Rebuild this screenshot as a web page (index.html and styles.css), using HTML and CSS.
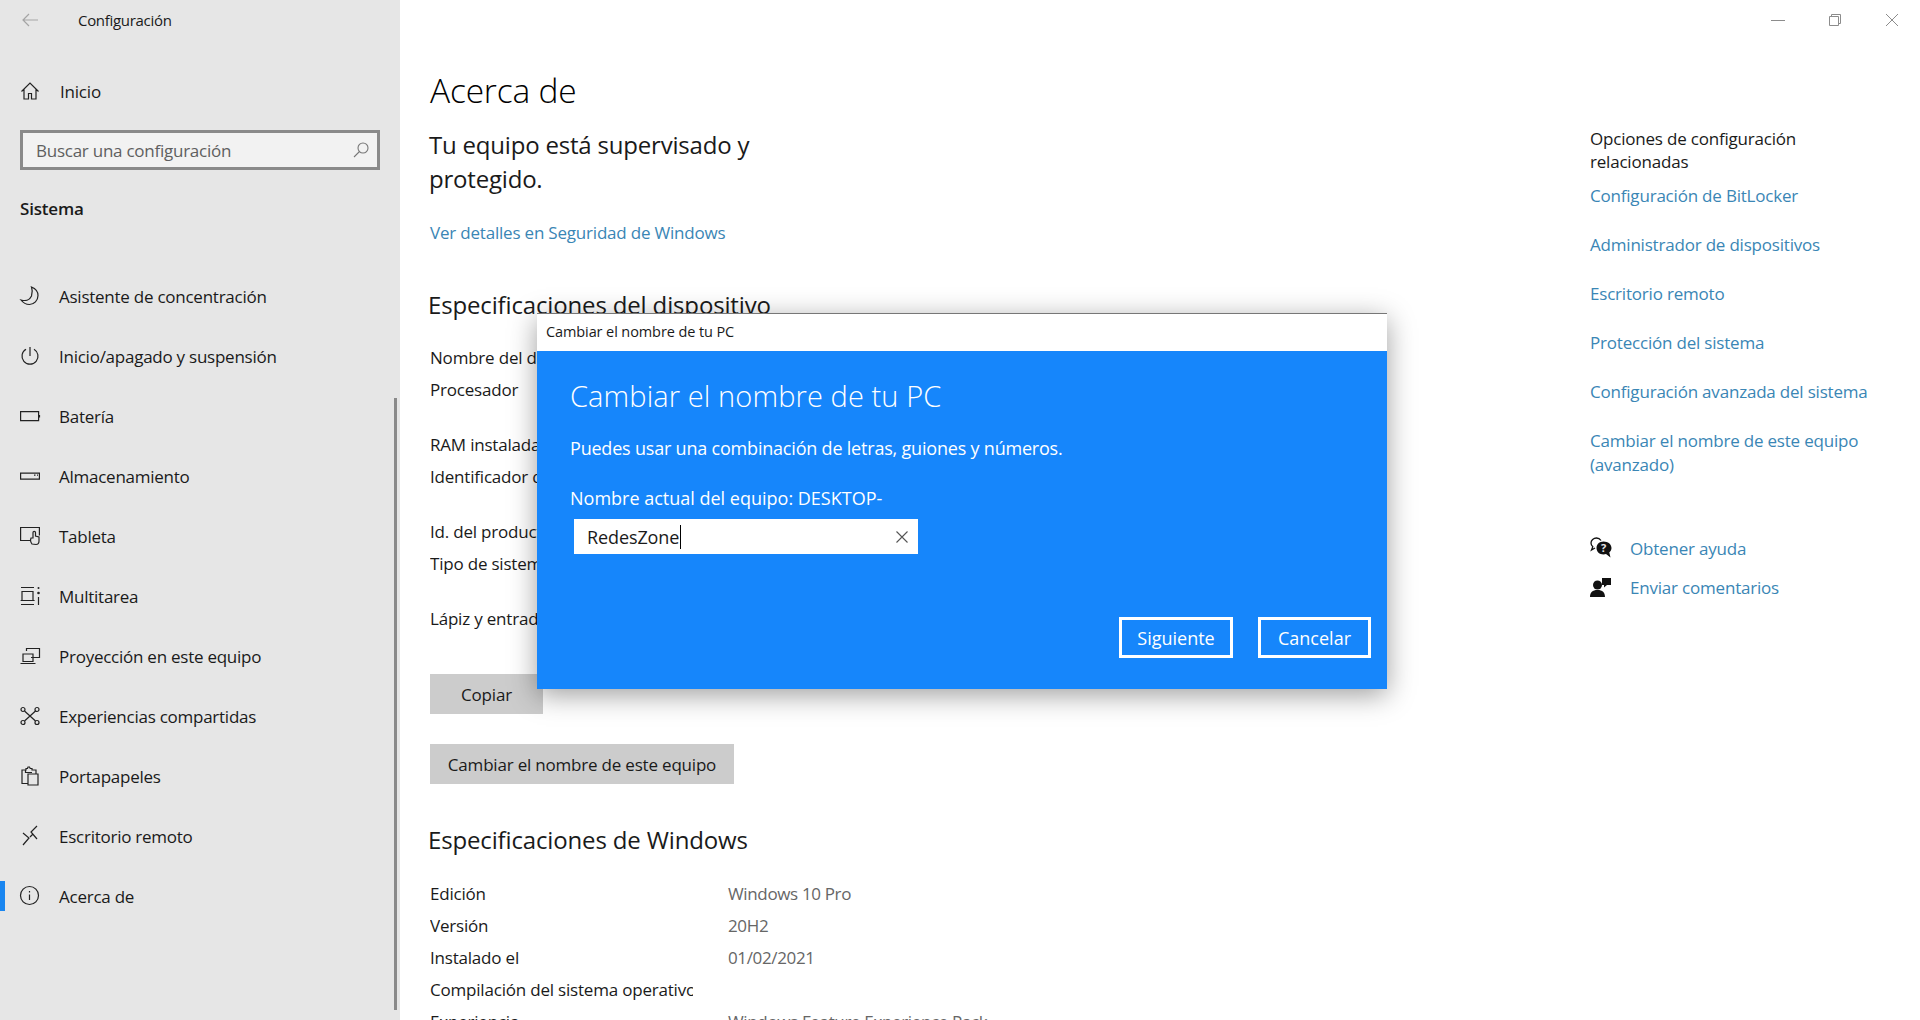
FILE: index.html
```html
<!DOCTYPE html>
<html lang="es">
<head>
    <meta charset="UTF-8">
    <meta name="viewport" content="width=device-width, initial-scale=1.0">
    <title>Configuración</title>
    <link rel="stylesheet" href="styles.css">
</head>
<body>
    <div class="app">
        <aside class="sidebar">
            <div class="app-title">
                <svg class="back" width="20" height="20" viewBox="0 0 20 20"><path d="M18 10H3M9 4l-6 6 6 6"/></svg>
                <span>Configuración</span>
            </div>
            <a class="home-row">
                <svg class="ico" width="20" height="20" viewBox="0 0 20 20"><path d="M1.500 10.500L10 2l8.500 8.500M4 8.500V18h4.500v-5.500h3V18H16V8.500"/></svg>
                <span>Inicio</span>
            </a>
            <div class="search">
                <span>Buscar una configuración</span>
                <svg class="search-ico" width="18" height="18" viewBox="0 0 18 18"><circle cx="11" cy="7" r="5"/><path d="M7.500 10.500L2 16"/></svg>
            </div>
            <div class="section-name">Sistema</div>
            <nav class="nav">
                <a class="nav-item"><svg class="ico" width="20" height="20" viewBox="0 0 20 20"><path d="M11.500 1c3.800 1.500 6.500 4.500 6.500 8.500 0 5-4 9-8.500 9-3.500 0-6.500-1.800-8.500-4.500 5 1.500 9-.5 10.500-4 1-3 .9-6.500 0-9z"/></svg><span>Asistente de concentración</span></a>
                <a class="nav-item"><svg class="ico" width="20" height="20" viewBox="0 0 20 20"><path d="M10 1v9M6 3.200a8 8 0 1 0 8 0"/></svg><span>Inicio/apagado y suspensión</span></a>
                <a class="nav-item"><svg class="ico" width="20" height="20" viewBox="0 0 20 20"><path d="M.6 5.600h18v9H.6zM19.500 9v2.500"/></svg><span>Batería</span></a>
                <a class="nav-item"><svg class="ico" width="20" height="20" viewBox="0 0 20 20"><path d="M.6 7.100h18.800v6H.6zM14 9.200h1.500M17 9.200h1"/></svg><span>Almacenamiento</span></a>
                <a class="nav-item"><svg class="ico" width="20" height="20" viewBox="0 0 20 20"><path d="M11 14.500H.6V1.500h18.800v8M12 18c-1-1-1.500-2-1.500-4l.5-2h2V6.500c0-1.500 2.500-1.500 2.500 0V10l3.500 1v4c0 2-1 3.500-3 3.500z"/></svg><span>Tableta</span></a>
                <a class="nav-item"><svg class="ico" width="20" height="20" viewBox="0 0 20 20"><path d="M1 1.500h13M1 18.500h13M2 5.500h11v9H2zM.6 14.500h14M18.500 11v8"/><circle class="solid" cx="18.500" cy="7" r="1.300"/><circle class="solid" cx="18.500" cy="2" r="1"/></svg><span>Multitarea</span></a>
                <a class="nav-item"><svg class="ico" width="20" height="20" viewBox="0 0 20 20"><path d="M6.500 5V2.500h13v9H11M3 8h10v7.500H3zM.5 17.500h15"/></svg><span>Proyección en este equipo</span></a>
                <a class="nav-item"><svg class="ico" width="20" height="20" viewBox="0 0 20 20"><circle cx="3" cy="3.500" r="2"/><circle cx="17" cy="3.500" r="2"/><circle cx="3" cy="16.500" r="2"/><circle cx="17" cy="16.500" r="2"/><path d="M4.500 5l11 10M15.500 5l-11 10"/></svg><span>Experiencias compartidas</span></a>
                <a class="nav-item"><svg class="ico" width="20" height="20" viewBox="0 0 20 20"><path d="M8 17.500H2V4h4V2.500h1.500L8 1l1.500 0 .7 1.500H12V4h4v3.500M5.500 4v2.500H12M8 8h10v11H8z"/></svg><span>Portapapeles</span></a>
                <a class="nav-item"><svg class="ico" width="20" height="20" viewBox="0 0 20 20"><path d="M3 7l6 5-6 7M10 11l3-3M17 0l-6 6 6 7"/></svg><span>Escritorio remoto</span></a>
                <a class="nav-item active"><svg class="ico" width="20" height="20" viewBox="0 0 20 20"><circle cx="9.500" cy="9.500" r="9"/><path d="M9.500 8.500v5.500M9.500 5v1.500"/></svg><span>Acerca de</span></a>
            </nav>
            <div class="side-scroll"></div>
        </aside>

        <main class="content">
            <h1>Acerca de</h1>
            <h2 class="status">Tu equipo está supervisado y protegido.</h2>
            <a class="link details-link">Ver detalles en Seguridad de Windows</a>

            <h3>Especificaciones del dispositivo</h3>
            <div class="spec-group first">
                <div class="spec"><span class="key">Nombre del dispositivo</span></div>
                <div class="spec"><span class="key">Procesador</span></div>
            </div>
            <div class="spec-group">
                <div class="spec"><span class="key">RAM instalada</span></div>
                <div class="spec"><span class="key">Identificador de dispositivo</span></div>
            </div>
            <div class="spec-group">
                <div class="spec"><span class="key">Id. del producto</span></div>
                <div class="spec"><span class="key">Tipo de sistema</span></div>
            </div>
            <div class="spec-group">
                <div class="spec"><span class="key">Lápiz y entrada táctil</span></div>
            </div>
            <button class="btn copy-btn">Copiar</button>
            <button class="btn rename-btn">Cambiar el nombre de este equipo</button>

            <h3 class="win-head">Especificaciones de Windows</h3>
            <div class="spec-group win-specs">
                <div class="spec"><span class="key">Edición</span><span class="val">Windows 10 Pro</span></div>
                <div class="spec"><span class="key">Versión</span><span class="val">20H2</span></div>
                <div class="spec"><span class="key">Instalado el</span><span class="val">01/02/2021</span></div>
                <div class="spec"><span class="key">Compilación del sistema operativo</span></div>
                <div class="spec"><span class="key">Experiencia</span><span class="val">Windows Feature Experience Pack</span></div>
            </div>
        </main>

        <aside class="related">
            <div class="win-controls">
                <span class="win-btn"><svg width="14" height="14" viewBox="0 0 14 14"><path d="M0 7.500h14"/></svg></span>
                <span class="win-btn"><svg width="14" height="14" viewBox="0 0 14 14"><path d="M1.500 3.500h9v9h-9zM3.500 3.500v-2h9v9h-2"/></svg></span>
                <span class="win-btn"><svg width="14" height="14" viewBox="0 0 14 14"><path d="M1 1l12 12M13 1L1 13"/></svg></span>
            </div>
            <div class="related-title">Opciones de configuración relacionadas</div>
            <a class="link rel-link">Configuración de BitLocker</a>
            <a class="link rel-link">Administrador de dispositivos</a>
            <a class="link rel-link">Escritorio remoto</a>
            <a class="link rel-link">Protección del sistema</a>
            <a class="link rel-link">Configuración avanzada del sistema</a>
            <a class="link rel-link">Cambiar el nombre de este equipo (avanzado)</a>
            <div class="help-list">
                <a class="help-row">
                    <svg width="22" height="22" viewBox="0 0 22 22"><path class="outline" d="M11 3.500C10 2 8.500 1 6.500 1 3.500 1 1 3.200 1 6c0 1.500.7 2.800 1.800 3.700L1.500 13l3.500-2"/><path d="M13.500 4.500c-4 0-7 2.800-7 6.500s3 6.500 7 6.500c1 0 1.700-.2 2.500-.4l4.500 3.400-1.200-5c1.300-1.200 2.200-2.800 2.200-4.500 0-3.700-3.500-6.500-8-6.500z"/><text x="13.500" y="15" class="help-q">?</text></svg>
                    <span class="link">Obtener ayuda</span>
                </a>
                <a class="help-row">
                    <svg width="22" height="22" viewBox="0 0 22 22"><circle cx="7.500" cy="9" r="4.500"/><path d="M0 21c0-4.500 2.500-7 7.500-7s7.500 2.500 7.500 7zM12 2h9v7h-4l-3 2.500V9h-2z"/></svg>
                    <span class="link">Enviar comentarios</span>
                </a>
            </div>
        </aside>
    </div>

    <div class="dialog">
        <div class="dialog-bar">Cambiar el nombre de tu PC</div>
        <div class="dialog-body">
            <div class="dialog-title">Cambiar el nombre de tu PC</div>
            <p class="dialog-hint">Puedes usar una combinación de letras, guiones y números.</p>
            <p class="dialog-current">Nombre actual del equipo: DESKTOP-</p>
            <div class="name-input">
                <span class="typed">RedesZone</span>
                <svg width="14" height="14" viewBox="0 0 14 14"><path d="M1.500 1.500l11 11M12.500 1.500l-11 11"/></svg>
            </div>
            <div class="dialog-actions">
                <button class="outline-btn next-btn">Siguiente</button>
                <button class="outline-btn cancel-btn">Cancelar</button>
            </div>
        </div>
    </div>
</body>
</html>
```

FILE: styles.css
```css
html, body {
    margin: 0;
    height: 1020px;
    overflow: hidden;
}
body {
    position: relative;
    font-family: "Open Sans", "Noto Sans", Arial, sans-serif;
    font-size: 17px;
    color: #1a1a1a;
    background: #fff;
    letter-spacing: -0.2px;
}
a {
    display: block;
}
.app {
    display: flex;
    height: 1020px;
}

/* left column */
.sidebar {
    position: relative;
    flex: 0 0 400px;
    background: #e6e6e6;
}
.app-title {
    display: flex;
    align-items: center;
    height: 40px;
    font-size: 15px;
    letter-spacing: -0.3px;
}
.back {
    margin-left: 20px;
    margin-right: 38px;
    fill: none;
    stroke: #a5a5a5;
    stroke-width: 1.2;
}
.home-row {
    display: flex;
    align-items: center;
    gap: 20px;
    height: 40px;
    margin-top: 31px;
    padding-left: 20px;
}
.ico {
    flex: none;
    overflow: visible;
    fill: none;
    stroke: #222;
    stroke-width: 1.2;
}
.ico .solid {
    fill: #222;
    stroke: none;
}
.search {
    display: flex;
    align-items: center;
    justify-content: space-between;
    box-sizing: border-box;
    width: 360px;
    height: 40px;
    margin: 19px 0 0 20px;
    padding: 0 7px 0 13px;
    border: 3px solid #8a8a8a;
    background: #f2f2f2;
    color: #5f5f5f;
    letter-spacing: -0.25px;
}
.search-ico {
    fill: none;
    stroke: #777;
    stroke-width: 1.1;
}
.section-name {
    height: 30px;
    margin: 24px 0 0 20px;
    line-height: 30px;
    font-weight: 600;
}
.nav {
    margin-top: 42px;
}
.nav-item {
    position: relative;
    display: flex;
    align-items: center;
    gap: 19px;
    height: 60px;
    padding-left: 20px;
    letter-spacing: -0.25px;
}
.nav-item.active::before {
    content: "";
    position: absolute;
    left: 0;
    top: 15px;
    width: 5px;
    height: 30px;
    background: #1a86f0;
}
.side-scroll {
    position: absolute;
    left: 394px;
    top: 398px;
    width: 3px;
    height: 612px;
    background: #8a8a8a;
}

/* middle column */
.content {
    flex: 0 0 1190px;
    box-sizing: border-box;
    padding-left: 30px;
}
h1 {
    margin: 65px 0 0;
    font-size: 33.500px;
    font-weight: 300;
    line-height: 50px;
    color: #000;
}
.status {
    width: 370px;
    margin: 13px 0 0 -1px;
    font-size: 24px;
    font-weight: 400;
    line-height: 34px;
    letter-spacing: -0.2px;
}
.link {
    color: #3a86b5;
}
.details-link {
    margin-top: 22px;
    line-height: 30px;
}
h3 {
    margin: 39px 0 0 -2px;
    font-size: 24px;
    font-weight: 400;
    line-height: 36px;
    letter-spacing: -0.15px;
}
.spec-group {
    margin-top: 23px;
}
.spec-group.first {
    margin-top: 19px;
}
.spec-group.win-specs {
    margin-top: 20px;
}
.spec {
    display: flex;
    gap: 35px;
    height: 32px;
    line-height: 32px;
}
.key {
    flex: 0 0 263px;
    overflow: hidden;
    white-space: nowrap;
}
.val {
    color: #666;
    letter-spacing: -0.35px;
}
.btn {
    display: block;
    height: 40px;
    padding: 0;
    border: none;
    background: #ccc;
    color: #1a1a1a;
    font: inherit;
    letter-spacing: inherit;
}
.copy-btn {
    width: 113px;
    margin-top: 39px;
}
.rename-btn {
    width: 304px;
    margin-top: 30px;
}
h3.win-head {
    margin-top: 38px;
}

/* right column */
.related {
    flex: 0 0 330px;
}
.win-controls {
    display: flex;
    justify-content: flex-end;
    height: 40px;
}
.win-btn {
    display: flex;
    align-items: center;
    justify-content: center;
    width: 57px;
}
.win-btn svg {
    fill: none;
    stroke: #8c8c8c;
    stroke-width: 1;
}
.related-title {
    width: 270px;
    margin-top: 87px;
    line-height: 23px;
}
.rel-link {
    margin-top: 25px;
    width: 290px;
    line-height: 24px;
}
.related-title + .rel-link {
    margin-top: 11px;
}
.help-list {
    display: flex;
    flex-direction: column;
    gap: 15px;
    margin-top: 59px;
}
.help-row {
    display: flex;
    align-items: center;
    gap: 18px;
    height: 24px;
}
.help-row svg {
    fill: #111;
}
.help-row .outline {
    fill: none;
    stroke: #111;
    stroke-width: 1.3;
}
.help-q {
    fill: #e6e6e6;
    font-size: 11px;
    font-weight: 700;
    text-anchor: middle;
}

/* rename dialog, floats over the page */
.dialog {
    position: absolute;
    left: 537px;
    top: 313px;
    width: 850px;
    height: 376px;
    display: flex;
    flex-direction: column;
    border-top: 1px solid #777;
    box-sizing: border-box;
    box-shadow: 0 6px 26px rgba(0, 0, 0, 0.38);
}
.dialog-bar {
    flex: 0 0 37px;
    padding-left: 9px;
    background: #fff;
    font-size: 14.500px;
    line-height: 36px;
    letter-spacing: -0.1px;
}
.dialog-body {
    flex: 1;
    padding: 0 16px 0 33px;
    background: #1686fb;
    color: #fff;
    font-size: 18px;
}
.dialog-title {
    margin-top: 25px;
    font-size: 29px;
    font-weight: 300;
    line-height: 40px;
    letter-spacing: 0.1px;
}
.dialog-hint {
    margin: 17px 0 0;
    line-height: 30px;
}
.dialog-current {
    margin: 20px 0 0;
    line-height: 30px;
    letter-spacing: 0;
}
.name-input {
    display: flex;
    align-items: center;
    justify-content: space-between;
    box-sizing: border-box;
    width: 344px;
    height: 35px;
    margin: 6px 0 0 4px;
    padding: 0 9px 0 13px;
    background: #fff;
    color: #1a1a1a;
    letter-spacing: -0.1px;
}
.typed {
    padding-right: 1px;
    border-right: 1px solid #000;
    line-height: 24px;
}
.name-input svg {
    fill: none;
    stroke: #555;
    stroke-width: 1.1;
}
.dialog-actions {
    display: flex;
    justify-content: flex-end;
    gap: 25px;
    margin-top: 63px;
}
.outline-btn {
    height: 41px;
    padding: 0;
    border: 3px solid #fff;
    background: transparent;
    color: #fff;
    font: inherit;
    letter-spacing: 0;
}
.next-btn {
    width: 114px;
}
.cancel-btn {
    width: 113px;
}
```
